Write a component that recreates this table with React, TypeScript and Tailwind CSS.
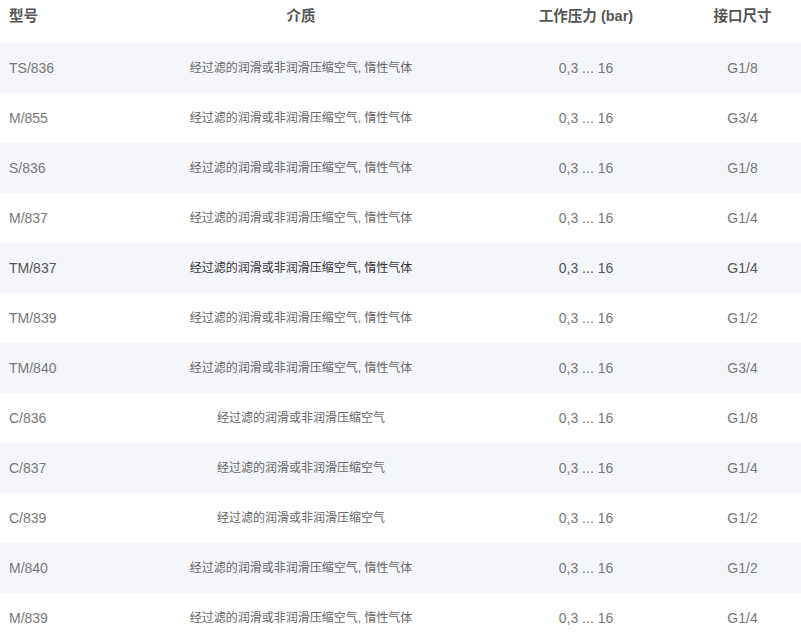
const rows = [
  ['TS/836', '经过滤的润滑或非润滑压缩空气, 惰性气体', 'G1/8'],
  ['M/855', '经过滤的润滑或非润滑压缩空气, 惰性气体', 'G3/4'],
  ['S/836', '经过滤的润滑或非润滑压缩空气, 惰性气体', 'G1/8'],
  ['M/837', '经过滤的润滑或非润滑压缩空气, 惰性气体', 'G1/4'],
  ['TM/837', '经过滤的润滑或非润滑压缩空气, 惰性气体', 'G1/4'],
  ['TM/839', '经过滤的润滑或非润滑压缩空气, 惰性气体', 'G1/2'],
  ['TM/840', '经过滤的润滑或非润滑压缩空气, 惰性气体', 'G3/4'],
  ['C/836', '经过滤的润滑或非润滑压缩空气', 'G1/8'],
  ['C/837', '经过滤的润滑或非润滑压缩空气', 'G1/4'],
  ['C/839', '经过滤的润滑或非润滑压缩空气', 'G1/2'],
  ['M/840', '经过滤的润滑或非润滑压缩空气, 惰性气体', 'G1/2'],
  ['M/839', '经过滤的润滑或非润滑压缩空气, 惰性气体', 'G1/4'],
];

export default function App() {
  return (
    <div
      className="w-[801px] bg-white"
      style={{ fontFamily: '"Liberation Sans", "Noto Sans CJK SC", sans-serif' }}
    >
      <table className="w-full border-collapse table-fixed">
        <colgroup>
          <col className="w-[114px]" />
          <col className="w-[374px]" />
          <col className="w-[196px]" />
          <col className="w-[117px]" />
        </colgroup>
        <thead>
          <tr className="h-[43px] text-[14.5px] font-bold text-[#555]">
            <th className="text-left pl-[9px] pb-[9px]">型号</th>
            <th className="text-center pb-[9px]">介质</th>
            <th className="text-center pb-[9px]">工作压力 (bar)</th>
            <th className="text-center pb-[9px]">接口尺寸</th>
          </tr>
        </thead>
        <tbody>
          {rows.map(([model, medium, size], i) => {
            const hover = model === 'TM/837';
            return (
              <tr
                key={model}
                className={`h-[50px] ${i % 2 === 0 ? 'bg-[#f5f6fa]' : 'bg-white'} ${hover ? 'text-[#555]' : 'text-[#777]'}`}
              >
                <td className="pl-[9px] text-[14px]">{model}</td>
                <td className={`text-center text-[12px] ${hover ? 'text-[#333]' : 'text-[#666]'}`}>{medium}</td>
                <td className="text-center text-[14px]">0,3 ... 16</td>
                <td className="text-center text-[14px]">{size}</td>
              </tr>
            );
          })}
        </tbody>
      </table>
    </div>
  );
}
